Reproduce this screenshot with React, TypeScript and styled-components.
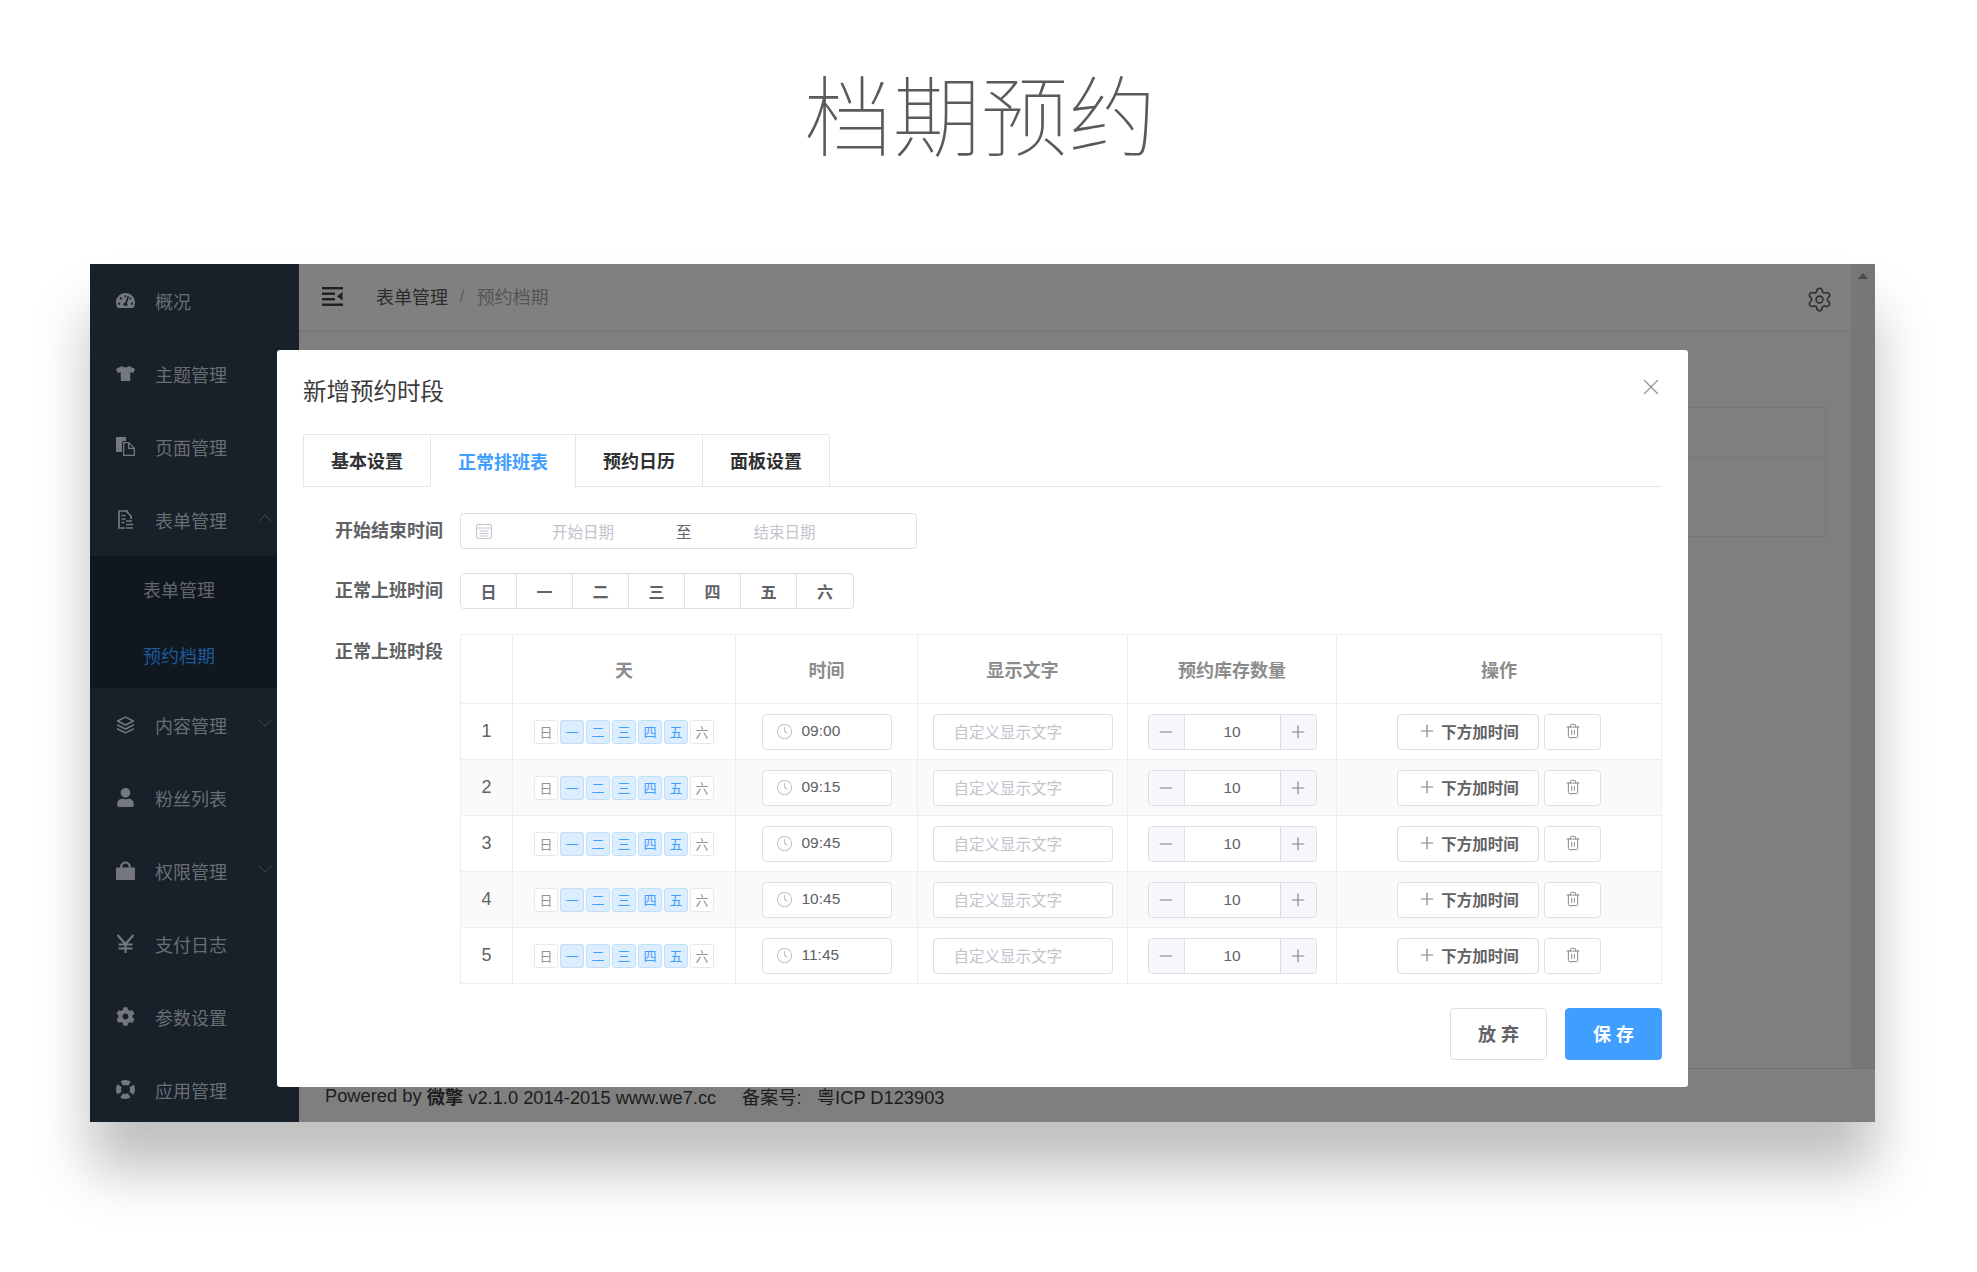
import React from "react";
import styled, { createGlobalStyle } from "styled-components";
import { ChevronDown, ChevronUp, Clock, Minus, Plus, Settings, Trash2, X } from "lucide-react";
import { FaCog, FaTachometerAlt, FaTshirt, FaUser } from "react-icons/fa";
import { FiLayers } from "react-icons/fi";

const FONT = `"Liberation Sans", "Noto Sans CJK SC", sans-serif`;

const Global = createGlobalStyle`
  html, body { margin: 0; padding: 0; background: #fff; }
  body { font-family: ${FONT}; overflow: hidden; }
  * { box-sizing: border-box; }
`;

const Page = styled.div`
  width: 1977px;
  height: 1272px;
  display: flex;
  flex-direction: column;
  background: #fff;
`;

const Hero = styled.h1`
  margin: 0 0 0 -16px;
  height: 264px;
  padding-top: 51px;
  text-align: center;
  font: 100 88px/120px "Noto Sans CJK SC", sans-serif;
  color: #5a5a5a;
`;

const Win = styled.div`
  position: relative;
  width: 1785px;
  height: 858px;
  margin-left: 90px;
  display: flex;
  background: #7f7f7f;
  box-shadow: 0 48px 52px rgba(0, 0, 0, 0.25);
`;

const Sidebar = styled.nav`
  width: 209px;
  flex: none;
  background: #18202a;
  overflow: hidden;
`;

const MenuItem = styled.div`
  height: 73px;
  display: flex;
  align-items: center;
  padding-left: 26px;
  color: #696e74;
  font-size: 18px;
  position: relative;
`;

const MenuIcon = styled.span`
  width: 19px;
  height: 19px;
  margin-right: 20px;
  display: flex;
  align-items: center;
  justify-content: center;
  color: #74787d;
`;

const MenuChevron = styled.span`
  position: absolute;
  left: 163px;
  top: 23px;
  color: #3f454c;
  display: flex;
`;

const SubMenu = styled.div`
  background: #11171f;
`;

const SubItem = styled.div<{ $active?: boolean }>`
  height: 66px;
  display: flex;
  align-items: center;
  padding-left: 53px;
  font-size: 18px;
  color: ${(p) => (p.$active ? "#1d5a9c" : "#62676d")};
`;

const Main = styled.div`
  flex: 1;
  min-width: 0;
  display: flex;
  flex-direction: column;
`;

const Upper = styled.div`
  flex: 1;
  min-height: 0;
  display: flex;
`;

const Column = styled.div`
  flex: 1;
  min-width: 0;
  display: flex;
  flex-direction: column;
`;

const Topbar = styled.header`
  height: 68px;
  flex: none;
  display: flex;
  align-items: center;
  padding: 0 18px 2px 23px;
  border-bottom: 2px solid #777;
  background: #808080;
`;

const Crumb = styled.span<{ $dim?: boolean }>`
  font-size: 18px;
  color: ${(p) => (p.$dim ? "#555" : "#2c2c2c")};
`;

const CrumbSep = styled.span`
  font-size: 16px;
  color: #5c5c5c;
  margin: 0 12px;
`;

const MenuToggle = styled.svg`
  width: 21px;
  height: 19px;
  margin-right: 33px;
  flex: none;
`;

const GearWrap = styled.span`
  margin: 6px 0 0 auto;
  color: #2e2e2e;
  display: flex;
`;

const Content = styled.div`
  flex: 1;
  padding: 75px 25px 0 26px;
`;

const BackCard = styled.div`
  height: 130px;
  border: 1px solid #777;
`;

const BackRow = styled.div`
  height: 50px;
  border-bottom: 1px solid #777;
`;

const ScrollStrip = styled.div`
  width: 24px;
  flex: none;
  background: #777;
  display: flex;
  justify-content: center;
  padding-top: 9px;
`;

const ScrollArrow = styled.span`
  width: 0;
  height: 0;
  border-left: 5px solid transparent;
  border-right: 5px solid transparent;
  border-bottom: 6px solid #4c4c4c;
`;

const Footer = styled.footer`
  height: 54px;
  flex: none;
  display: flex;
  align-items: center;
  padding: 1px 0 0 26px;
  border-top: 1px solid #6e6e6e;
  font-size: 18.3px;
  color: #1d1d1d;
  white-space: pre;
`;

const Modal = styled.section`
  position: absolute;
  left: 187px;
  top: 86px;
  width: 1411px;
  height: 737px;
  padding: 26px 26px 27px 26px;
  background: #fff;
  border-radius: 3px;
`;

const ModalTitle = styled.h2`
  margin: 0 0 26px;
  font: 400 23.5px/32px ${FONT};
  color: #3c3c3c;
`;

const CloseBtn = styled.span`
  position: absolute;
  right: 24px;
  top: 24px;
  color: #909399;
  display: flex;
`;

const Tabs = styled.div`
  height: 53px;
  display: flex;
  border-bottom: 1px solid #e4e7ed;
  margin-bottom: 26px;
`;

const TabGroup = styled.div`
  display: flex;
  height: 53px;
  border: 1px solid #e4e7ed;
  border-bottom: none;
  border-radius: 3px 3px 0 0;
`;

const Tab = styled.div<{ $active?: boolean }>`
  padding: 0 27px 2px;
  height: ${(p) => (p.$active ? "53px" : "52px")};
  display: flex;
  align-items: center;
  font-size: 18px;
  font-weight: 700;
  color: ${(p) => (p.$active ? "#409eff" : "#303133")};
  background: #fff;
  border-right: 1px solid #e4e7ed;
  border-bottom: ${(p) => (p.$active ? "none" : "1px solid #e4e7ed")};
  &:last-child { border-right: none; }
`;

const FormRow = styled.div<{ $gap?: number }>`
  display: flex;
  margin-bottom: ${(p) => p.$gap ?? 24}px;
`;

const Label = styled.label`
  width: 140px;
  height: 36px;
  flex: none;
  margin-right: 17px;
  text-align: right;
  font-size: 18px;
  font-weight: 700;
  line-height: 37px;
  color: #606266;
`;

const DateRange = styled.div`
  width: 457px;
  height: 36px;
  display: flex;
  align-items: center;
  border: 1px solid #dcdfe6;
  border-radius: 4px;
  font-size: 15.5px;
  color: #c0c4cc;
  padding-left: 15px;
`;

const DateIcon = styled.svg`
  width: 16px;
  height: 16px;
  margin-right: 60px;
  flex: none;
`;

const DateText = styled.span<{ $dark?: boolean; $gap?: number }>`
  color: ${(p) => (p.$dark ? "#606266" : "#c0c4cc")};
  margin-right: ${(p) => p.$gap ?? 0}px;
`;

const WeekGroup = styled.div`
  display: flex;
  height: 36px;
  border: 1px solid #dcdfe6;
  border-radius: 4px;
`;

const WeekCell = styled.div`
  width: 56px;
  display: flex;
  align-items: center;
  justify-content: center;
  font-size: 16px;
  font-weight: 700;
  padding-bottom: 1px;
  color: #606266;
  border-right: 1px solid #dcdfe6;
  &:last-child { border-right: none; }
`;

const Table = styled.table`
  width: 1201px;
  table-layout: fixed;
  border-collapse: collapse;
`;

const Th = styled.th`
  height: 69px;
  padding: 0;
  border: 1px solid #ebeef5;
  font-size: 18px;
  font-weight: 700;
  color: #8c8c8c;
  text-align: center;
`;

const Tr = styled.tr<{ $striped: boolean }>`
  height: 56px;
  background: ${(p) => (p.$striped ? "#fafafa" : "#fff")};
`;

const Td = styled.td`
  padding: 0;
  border: 1px solid #ebeef5;
  text-align: center;
  font-size: 18px;
  color: #606266;
`;

const CellRow = styled.div<{ $gap?: number }>`
  display: flex;
  align-items: center;
  justify-content: center;
  gap: ${(p) => p.$gap ?? 0}px;
`;

const Chip = styled.span<{ $on: boolean }>`
  width: 24px;
  height: 24px;
  display: flex;
  align-items: center;
  justify-content: center;
  font-size: 13px;
  padding-bottom: 1px;
  border-radius: 3px;
  border: 1px solid ${(p) => (p.$on ? "#c0dffd" : "#e4e7ed")};
  background: ${(p) => (p.$on ? "#dcedfe" : "#fff")};
  color: ${(p) => (p.$on ? "#409eff" : "#909399")};
`;

const InputBox = styled.div<{ $w: number; $pale?: boolean }>`
  width: ${(p) => p.$w}px;
  height: 36px;
  display: flex;
  align-items: center;
  background: #fff;
  border: 1px solid #dcdfe6;
  border-radius: 4px;
  font-size: 15.5px;
  color: ${(p) => (p.$pale ? "#c0c4cc" : "#606266")};
  padding: 0 0 1px ${(p) => (p.$pale ? 20 : 13)}px;
`;

const TimeIcon = styled.span`
  display: flex;
  color: #bfc3ca;
  margin-right: 9px;
`;

const Stepper = styled.div`
  width: 169px;
  height: 36px;
  display: flex;
  background: #fff;
  border: 1px solid #dcdfe6;
  border-radius: 4px;
  overflow: hidden;
`;

const StepBtn = styled.span<{ $side: "l" | "r" }>`
  width: 36px;
  flex: none;
  display: flex;
  align-items: center;
  justify-content: center;
  background: #f5f7fa;
  color: #7f8288;
  border-${(p) => (p.$side === "l" ? "right" : "left")}: 1px solid #dcdfe6;
`;

const StepValue = styled.span`
  flex: 1;
  display: flex;
  align-items: center;
  justify-content: center;
  font-size: 15.5px;
  color: #606266;
`;

const GhostBtn = styled.span<{ $w: number }>`
  width: ${(p) => p.$w}px;
  height: 36px;
  display: flex;
  align-items: center;
  justify-content: center;
  background: #fff;
  border: 1px solid #dcdfe6;
  border-radius: 4px;
  font-size: 15.5px;
  font-weight: 700;
  color: #606266;
  gap: 4px;
  padding-bottom: 1px;
`;

const TrashIcon = styled(Trash2)`
  color: #85888e;
`;

const AddIcon = styled(Plus)`
  color: #7f8288;
`;

const Actions = styled.div`
  display: flex;
  justify-content: flex-end;
  gap: 18px;
  margin-top: 24px;
`;

const ActionBtn = styled.span<{ $primary?: boolean }>`
  width: 97px;
  height: 52px;
  display: flex;
  align-items: center;
  justify-content: center;
  font-size: 18px;
  font-weight: 700;
  letter-spacing: 5px;
  padding: 0 0 2px 5px;
  border-radius: 4px;
  background: ${(p) => (p.$primary ? "#409eff" : "#fff")};
  border: 1px solid ${(p) => (p.$primary ? "#409eff" : "#dcdfe6")};
  color: ${(p) => (p.$primary ? "#fff" : "#606266")};
`;

const WEEK = ["日", "一", "二", "三", "四", "五", "六"];
const TIMES = ["09:00", "09:15", "09:45", "10:45", "11:45"];
const COLS = [52, 223, 182, 210, 209, 325];
const HEADS = ["", "天", "时间", "显示文字", "预约库存数量", "操作"];

const FormIcon = () => (
  <svg width="17" height="19" viewBox="0 0 17 19" fill="none" stroke="currentColor" strokeWidth="1.7">
    <path d="M11 1H2v17h6" />
    <path d="M4.5 5.5h4M4.5 9h4M4.5 12.5h3" />
    <path d="M9 1l5 5v3M9 11h6M9 14.5h7M9 18h7" />
  </svg>
);

const PagesIcon = () => (
  <svg width="19" height="19" viewBox="0 0 19 19" fill="currentColor">
    <path d="M0 0h10v4H7.5A1.5 1.5 0 0 0 6 5.5V15H0z" />
    <path fillRule="evenodd" d="M7 5h6l6 6v8H7zm1.3 1.3v11.4h9.4V12H12V6.3zM13.3 6.8v3.9h3.9z" />
  </svg>
);

const PadlockIcon = () => (
  <svg width="19" height="19" viewBox="0 0 19 19" fill="currentColor">
    <path fillRule="evenodd" d="M9.5 0.5C6.4 0.5 4 3 4 6.5H1.2A1.2 1.2 0 0 0 0 7.7v10.1A1.2 1.2 0 0 0 1.2 19h16.6a1.2 1.2 0 0 0 1.2-1.2V7.7a1.2 1.2 0 0 0-1.2-1.2H15C15 3 12.6 0.5 9.5 0.5zM6.2 6.5C6.2 4.2 7.6 2.6 9.5 2.6s3.3 1.6 3.3 3.9z" />
  </svg>
);

const YenIcon = () => (
  <svg width="19" height="19" viewBox="0 0 19 19" fill="none" stroke="currentColor" strokeWidth="2.2">
    <path d="M1.5 1l8 9 8-9M9.5 10v9M2.5 10.5h14M2.5 14.5h14" />
  </svg>
);

const RingIcon = () => (
  <svg width="19" height="19" viewBox="0 0 19 19" fill="none" stroke="currentColor" strokeWidth="5">
    <circle cx="9.5" cy="9.5" r="7" strokeDasharray="8 3" strokeDashoffset="4" />
  </svg>
);

const MENU_A = [
  { icon: <FaTachometerAlt size={19} />, label: "概况" },
  { icon: <FaTshirt size={21} />, label: "主题管理" },
  { icon: <PagesIcon />, label: "页面管理" },
  { icon: <FormIcon />, label: "表单管理", up: true },
];
const MENU_B = [
  { icon: <FiLayers size={20} />, label: "内容管理", down: true },
  { icon: <FaUser size={19} />, label: "粉丝列表" },
  { icon: <PadlockIcon />, label: "权限管理", down: true },
  { icon: <YenIcon />, label: "支付日志" },
  { icon: <FaCog size={19} />, label: "参数设置" },
  { icon: <RingIcon />, label: "应用管理" },
];

type MenuDef = { icon: React.ReactNode; label: string; up?: boolean; down?: boolean };

const Item = ({ icon, label, up, down }: MenuDef) => (
  <MenuItem>
    <MenuIcon>{icon}</MenuIcon>
    {label}
    {up && (
      <MenuChevron>
        <ChevronUp size={24} strokeWidth={1} />
      </MenuChevron>
    )}
    {down && (
      <MenuChevron>
        <ChevronDown size={24} strokeWidth={1} />
      </MenuChevron>
    )}
  </MenuItem>
);

export default function App() {
  return (
    <Page>
      <Global />
      <Hero>档期预约</Hero>
      <Win>
        <Sidebar>
          {MENU_A.map((m) => (
            <Item key={m.label} {...m} />
          ))}
          <SubMenu>
            <SubItem>表单管理</SubItem>
            <SubItem $active>预约档期</SubItem>
          </SubMenu>
          {MENU_B.map((m) => (
            <Item key={m.label} {...m} />
          ))}
        </Sidebar>
        <Main>
          <Upper>
            <Column>
              <Topbar>
                <MenuToggle viewBox="0 0 21 19" fill="#1f1f1f">
                  <rect x="0" y="0" width="21" height="2.4" />
                  <rect x="0" y="5.5" width="13" height="2.4" />
                  <rect x="0" y="11" width="13" height="2.4" />
                  <rect x="0" y="16.5" width="21" height="2.4" />
                  <path d="M20.5 5v8.5L15 9.2z" />
                </MenuToggle>
                <Crumb>表单管理</Crumb>
                <CrumbSep>/</CrumbSep>
                <Crumb $dim>预约档期</Crumb>
                <GearWrap>
                  <Settings size={27} strokeWidth={1.4} />
                </GearWrap>
              </Topbar>
              <Content>
                <BackCard>
                  <BackRow />
                </BackCard>
              </Content>
            </Column>
            <ScrollStrip>
              <ScrollArrow />
            </ScrollStrip>
          </Upper>
          <Footer>
            Powered by <b>微擎</b> v2.1.0 2014-2015 www.we7.cc{"     "}备案号:{"   "}粤ICP D123903
          </Footer>
        </Main>

        <Modal>
          <ModalTitle>新增预约时段</ModalTitle>
          <CloseBtn>
            <X size={26} strokeWidth={1.1} />
          </CloseBtn>
          <Tabs>
            <TabGroup>
              <Tab>基本设置</Tab>
              <Tab $active>正常排班表</Tab>
              <Tab>预约日历</Tab>
              <Tab>面板设置</Tab>
            </TabGroup>
          </Tabs>
          <FormRow>
            <Label>开始结束时间</Label>
            <DateRange>
              <DateIcon viewBox="0 0 16 16" fill="none" stroke="#c0c4cc" strokeWidth="1">
                <rect x="0.5" y="1.5" width="15" height="14" rx="1.5" />
                <path d="M0.5 5h15M4 0.5v2M12 0.5v2M3.5 8h9M3.5 10.5h9M3.5 13h9" />
              </DateIcon>
              <DateText $gap={62}>开始日期</DateText>
              <DateText $dark $gap={62}>至</DateText>
              <DateText>结束日期</DateText>
            </DateRange>
          </FormRow>
          <FormRow $gap={25}>
            <Label>正常上班时间</Label>
            <WeekGroup>
              {WEEK.map((d) => (
                <WeekCell key={d}>{d}</WeekCell>
              ))}
            </WeekGroup>
          </FormRow>
          <FormRow $gap={0}>
            <Label>正常上班时段</Label>
            <Table>
              <colgroup>
                {COLS.map((w, i) => (
                  <col key={i} width={w} />
                ))}
              </colgroup>
              <thead>
                <tr>
                  {HEADS.map((h, i) => (
                    <Th key={i}>{h}</Th>
                  ))}
                </tr>
              </thead>
              <tbody>
                {TIMES.map((t, i) => (
                  <Tr key={t} $striped={i % 2 === 1}>
                    <Td>{i + 1}</Td>
                    <Td>
                      <CellRow $gap={2}>
                        {WEEK.map((d, k) => (
                          <Chip key={d} $on={k > 0 && k < 6}>
                            {d}
                          </Chip>
                        ))}
                      </CellRow>
                    </Td>
                    <Td>
                      <CellRow>
                        <InputBox $w={130}>
                          <TimeIcon>
                            <Clock size={17} strokeWidth={1.5} />
                          </TimeIcon>
                          {t}
                        </InputBox>
                      </CellRow>
                    </Td>
                    <Td>
                      <CellRow>
                        <InputBox $w={180} $pale>
                          自定义显示文字
                        </InputBox>
                      </CellRow>
                    </Td>
                    <Td>
                      <CellRow>
                        <Stepper>
                          <StepBtn $side="l">
                            <Minus size={20} strokeWidth={1.4} />
                          </StepBtn>
                          <StepValue>10</StepValue>
                          <StepBtn $side="r">
                            <Plus size={20} strokeWidth={1.4} />
                          </StepBtn>
                        </Stepper>
                      </CellRow>
                    </Td>
                    <Td>
                      <CellRow $gap={5}>
                        <GhostBtn $w={142}>
                          <AddIcon size={20} strokeWidth={1.4} />
                          下方加时间
                        </GhostBtn>
                        <GhostBtn $w={57}>
                          <TrashIcon size={16} strokeWidth={1.5} />
                        </GhostBtn>
                      </CellRow>
                    </Td>
                  </Tr>
                ))}
              </tbody>
            </Table>
          </FormRow>
          <Actions>
            <ActionBtn>放弃</ActionBtn>
            <ActionBtn $primary>保存</ActionBtn>
          </Actions>
        </Modal>
      </Win>
    </Page>
  );
}
